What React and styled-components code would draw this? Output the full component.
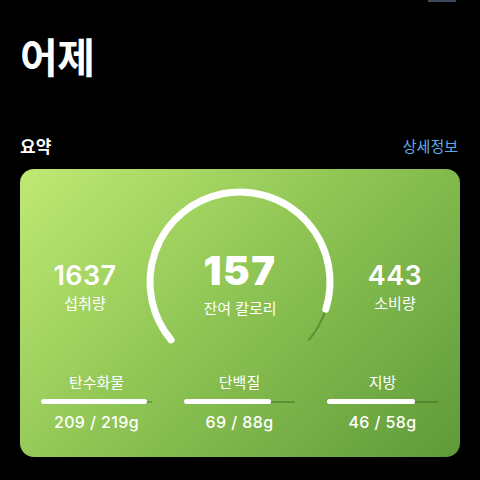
import styled, { createGlobalStyle } from "styled-components";

const GlobalStyle = createGlobalStyle`
  html, body {
    margin: 0;
    padding: 0;
    background: #000;
  }
  body {
    font-family: Inter, "Noto Sans CJK KR", sans-serif;
    color: #fff;
    width: 480px;
    height: 480px;
    overflow: hidden;
  }
`;

const Page = styled.div`
  padding: 0 20px;
`;

const TopStrip = styled.div`
  display: flex;
  justify-content: flex-end;
  padding-right: 4px;
`;

const Indicator = styled.div`
  width: 28px;
  height: 2px;
  background: #3c4a5c;
`;

const Title = styled.h1`
  margin: 32px 0 0;
  font-size: 41px;
  font-weight: 600;
  line-height: 1.2;
  letter-spacing: -0.5px;
`;

const SectionHeader = styled.div`
  display: flex;
  justify-content: space-between;
  align-items: center;
  margin-top: 50px;
`;

const SectionTitle = styled.span`
  font-size: 17px;
  font-weight: 700;
`;

const MoreLink = styled.span`
  font-size: 15px;
  color: #5eaee8;
  margin-right: 2px;
`;

const Card = styled.div`
  margin-top: 11px;
  height: 288px;
  border-radius: 14px;
  background: linear-gradient(135deg, #c0e974 0%, #90c655 45%, #5e9a39 100%);
  overflow: hidden;
`;

const GaugeArea = styled.div`
  position: relative;
  height: 190px;
`;

const GaugeSvg = styled.svg`
  position: absolute;
  left: 120px;
  top: 0;
`;

const StatsRow = styled.div`
  position: relative;
  display: grid;
  grid-template-columns: 130px 1fr 130px;
  height: 100%;
  padding-top: 82px;
  box-sizing: border-box;
`;

const Stat = styled.div`
  display: flex;
  flex-direction: column;
  align-items: center;
  padding-top: ${(p) => (p.$big ? "0" : "11px")};
`;

const StatValue = styled.div`
  font-size: ${(p) => (p.$big ? "40px" : "27px")};
  font-weight: ${(p) => (p.$big ? 900 : 600)};
  line-height: 1;
  letter-spacing: ${(p) => (p.$big ? "1.5px" : "0.4px")};
`;

const StatLabel = styled.div`
  font-size: 15px;
  margin-top: ${(p) => (p.$big ? "9px" : "6px")};
  line-height: 1.2;
`;

const Macros = styled.div`
  display: grid;
  grid-template-columns: repeat(3, 111px);
  column-gap: 32px;
  padding: 0 21px;
  margin-top: 15px;
`;

const Macro = styled.div`
  display: flex;
  flex-direction: column;
  align-items: center;
`;

const MacroLabel = styled.div`
  font-size: 15px;
  line-height: 1.2;
`;

const Bar = styled.div`
  position: relative;
  align-self: stretch;
  height: 5px;
  margin-top: 7px;
  display: flex;
  align-items: center;
`;

const Track = styled.div`
  width: 100%;
  height: 2px;
  background: rgba(40, 80, 20, 0.35);
`;

const Fill = styled.div`
  position: absolute;
  left: 0;
  top: 0;
  height: 5px;
  border-radius: 3px;
  background: #fff;
`;

const MacroValue = styled.div`
  font-size: 16px;
  font-weight: 500;
  margin-top: 8px;
  letter-spacing: 0.4px;
`;

const macros = [
  { label: "탄수화물", eaten: 209, goal: 219 },
  { label: "단백질", eaten: 69, goal: 88 },
  { label: "지방", eaten: 46, goal: 58 },
];

const Gauge = () => (
  <GaugeSvg width="200" height="190" viewBox="0 0 200 190">
    <path
      d="M 185.8 140.2 A 90 90 0 0 1 168.9 170.9"
      fill="none"
      stroke="rgba(45, 95, 25, 0.45)"
      strokeWidth="2"
      strokeLinecap="round"
    />
    <path
      d="M 31.1 170.9 A 90 90 0 1 1 185.8 140.2"
      fill="none"
      stroke="#fff"
      strokeWidth="7"
      strokeLinecap="round"
    />
  </GaugeSvg>
);

export default function App() {
  return (
    <>
      <GlobalStyle />
      <Page>
        <TopStrip>
          <Indicator />
        </TopStrip>
        <Title>어제</Title>
        <SectionHeader>
          <SectionTitle>요약</SectionTitle>
          <MoreLink>상세정보</MoreLink>
        </SectionHeader>
        <Card>
          <GaugeArea>
            <Gauge />
            <StatsRow>
              <Stat>
                <StatValue>1637</StatValue>
                <StatLabel>섭취량</StatLabel>
              </Stat>
              <Stat $big>
                <StatValue $big>157</StatValue>
                <StatLabel $big>잔여 칼로리</StatLabel>
              </Stat>
              <Stat>
                <StatValue>443</StatValue>
                <StatLabel>소비량</StatLabel>
              </Stat>
            </StatsRow>
          </GaugeArea>
          <Macros>
            {macros.map((m) => (
              <Macro key={m.label}>
                <MacroLabel>{m.label}</MacroLabel>
                <Bar>
                  <Track />
                  <Fill style={{ width: `${(m.eaten / m.goal) * 100}%` }} />
                </Bar>
                <MacroValue>
                  {m.eaten} / {m.goal}g
                </MacroValue>
              </Macro>
            ))}
          </Macros>
        </Card>
      </Page>
    </>
  );
}
